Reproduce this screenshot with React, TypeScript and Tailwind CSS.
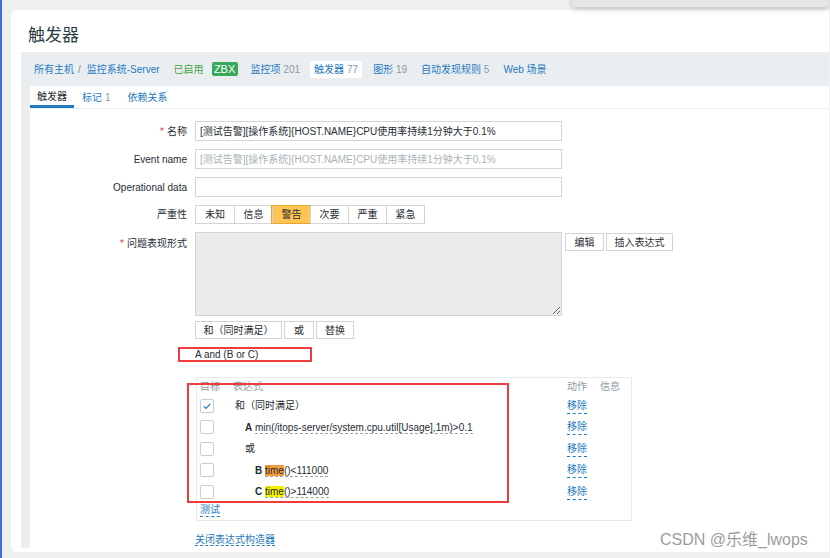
import type { ReactNode } from "react";

const font = "font-['Liberation_Sans','Noto_Sans_CJK_SC',sans-serif]";
const link = "text-[#1f7ac0]";
const dashed = "border-b border-dashed";

function Checkbox({ checked }: { checked?: boolean }) {
  return (
    <span className="flex h-[14px] w-[14px] items-center justify-center rounded-[2px] border border-[#c8ced2] bg-white">
      {checked ? (
        <svg viewBox="0 0 12 12" className="h-[10px] w-[10px]">
          <path d="M2.2 6.4l2.5 2.4L9.9 3.4" fill="none" stroke="#1f7ac0" strokeWidth="1.5" />
        </svg>
      ) : null}
    </span>
  );
}

function FormRow({
  label,
  required,
  top,
  children,
}: {
  label: string;
  required?: boolean;
  top?: boolean;
  children: ReactNode;
}) {
  return (
    <div className={`flex ${top ? "items-start" : "items-center"}`}>
      <div className={`w-[165px] shrink-0 pr-[8px] text-right text-[#1f2c33] ${top ? "pt-[4px]" : ""}`}>
        {required ? <span className="mr-[3px] text-[#d64545]">*</span> : null}
        {label}
      </div>
      {children}
    </div>
  );
}

function Input({ value, muted }: { value?: string; muted?: boolean }) {
  return (
    <div
      className={`flex h-[20px] w-[367px] items-center border border-[#d3d6d8] bg-white px-[4px] ${
        muted ? "text-[#a9b3b8]" : "text-[#1f2c33]"
      }`}
    >
      {value}
    </div>
  );
}

function Btn({ children, w }: { children: ReactNode; w: string }) {
  return (
    <div className={`flex h-[18px] ${w} items-center justify-center border border-[#cfd4d7] bg-white text-[#1f2c33]`}>
      {children}
    </div>
  );
}

const severities = ["未知", "信息", "警告", "次要", "严重", "紧急"];

const exprRows: { checked?: boolean; indent: string; content: ReactNode }[] = [
  { checked: true, indent: "pl-[2px]", content: <span>和（同时满足）</span> },
  {
    indent: "pl-[12px]",
    content: (
      <span>
        <b>A</b> <span className={`${dashed} border-[#9aa5ab]`}>min(/itops-server/system.cpu.util[Usage],1m)&gt;0.1</span>
      </span>
    ),
  },
  { indent: "pl-[12px]", content: <span>或</span> },
  {
    indent: "pl-[22px]",
    content: (
      <span>
        <b>B</b>{" "}
        <span className={`${dashed} border-[#9aa5ab]`}>
          <span className="bg-[#f79a3e]">time</span>()&lt;111000
        </span>
      </span>
    ),
  },
  {
    indent: "pl-[22px]",
    content: (
      <span>
        <b>C</b>{" "}
        <span className={`${dashed} border-[#9aa5ab]`}>
          <span className="bg-[#f4f000]">time</span>()&gt;114000
        </span>
      </span>
    ),
  },
];

export default function App() {
  return (
    <div className={`relative h-[558px] w-[830px] overflow-hidden bg-[#f0f0f0] ${font} text-[10px]`}>
      <div className="absolute left-0 top-0 h-full w-[2px] bg-[#3c6fdc]" />
      <div className="absolute -top-[20px] left-[572px] h-[27px] w-[257px] rounded-b-[4px] bg-[#e6e6e6] shadow-[0_2px_6px_rgba(0,0,0,0.2)]" />

      <div className="pl-[11px] pt-[10px]">
        <div className="flex h-[542px] w-[818px] flex-col rounded-l-[6px] bg-white">
          <h1 className="h-[42px] pl-[17px] pt-[16px] text-[17px] font-normal leading-[20px] text-[#2b3a42]">触发器</h1>

          <div className="ml-[10px] flex h-[496px] flex-col bg-[#ebeef0] pl-[9px]">
            <div className="flex h-[34px] items-center whitespace-nowrap pl-[4px]">
              <span className={link}>所有主机</span>
              <span className="ml-[4px] text-[#768d99]">/</span>
              <span className={`ml-[6px] ${link}`}>监控系统-Server</span>
              <span className="ml-[14px] text-[#3da548]">已启用</span>
              <span className="ml-[8px] flex h-[14px] w-[26px] items-center justify-center rounded-[2px] bg-[#39a85a] text-[11px] text-white">
                ZBX
              </span>
              <span className={`ml-[13px] ${link}`}>
                监控项 <span className="text-[#8a9aa2]">201</span>
              </span>
              <span className={`ml-[10px] flex h-[17px] items-center bg-white px-[4px] ${link}`}>
                触发器 <span className="ml-[3px] text-[#8a9aa2]">77</span>
              </span>
              <span className={`ml-[11px] ${link}`}>
                图形 <span className="text-[#8a9aa2]">19</span>
              </span>
              <span className={`ml-[14px] ${link}`}>
                自动发现规则 <span className="text-[#8a9aa2]">5</span>
              </span>
              <span className={`ml-[14px] ${link}`}>Web 场景</span>
            </div>

            <div className="flex flex-1 flex-col bg-white">
              <div className="flex h-[23px] border-b border-[#ebeef0]">
                <div className="flex h-full items-center border-b-[3px] border-[#1f7ac0] px-[7px] pt-[2px] text-[#1f2c33]">
                  触发器
                </div>
                <div className={`flex h-full items-center px-[8px] ${link}`}>
                  标记 <span className="ml-[3px] text-[#8a9aa2]">1</span>
                </div>
                <div className={`flex h-full items-center px-[9px] ${link}`}>依赖关系</div>
              </div>

              <div className="flex flex-col gap-[8px] pt-[12px]">
                <FormRow label="名称" required>
                  <Input value="[测试告警][操作系统]{HOST.NAME}CPU使用率持续1分钟大于0.1%" />
                </FormRow>
                <FormRow label="Event name">
                  <Input value="[测试告警][操作系统]{HOST.NAME}CPU使用率持续1分钟大于0.1%" muted />
                </FormRow>
                <FormRow label="Operational data">
                  <Input />
                </FormRow>
                <FormRow label="严重性">
                  <div className="flex h-[19px] border border-[#d3d6d8] bg-white">
                    {severities.map((s, i) => (
                      <div
                        key={s}
                        className={`flex w-[38px] items-center justify-center ${i > 0 ? "border-l border-[#d3d6d8]" : ""} ${
                          s === "警告" ? "bg-[#ffc451] text-[#1f2c33] outline outline-[#e6a63a]" : "text-[#1f2c33]"
                        }`}
                      >
                        {s}
                      </div>
                    ))}
                  </div>
                </FormRow>
                <FormRow label="问题表现形式" required top>
                  <div className="flex flex-col">
                    <div className="flex items-start gap-[3px]">
                      <textarea
                        readOnly
                        className="block h-[84px] w-[367px] border border-[#d3d6d8] bg-[#ebebeb] outline-none"
                      />
                      <div className="mt-[1px] flex gap-[2px]">
                        <Btn w="w-[39px]">编辑</Btn>
                        <Btn w="w-[67px]">插入表达式</Btn>
                      </div>
                    </div>
                    <div className="mt-[5px] flex gap-[2px]">
                      <Btn w="w-[87px]">和（同时满足）</Btn>
                      <Btn w="w-[30px]">或</Btn>
                      <Btn w="w-[38px]">替换</Btn>
                    </div>
                    <div className="relative mt-[9px] h-[14px] leading-[14px] text-[#1f2c33]">
                      A and (B or C)
                      <span className="absolute -left-[17px] top-[-1px] h-[15px] w-[134px] border-2 border-[#ef3b3b]" />
                    </div>

                    <div className="relative ml-[1px] mt-[15px] flex h-[144px] w-[436px] flex-col border border-[#e8ebec] px-[3px]">
                      <div className="grid h-[17px] grid-cols-[33px_334px_33px_1fr] items-center text-[#8a9aa2]">
                        <span>目标</span>
                        <span>表达式</span>
                        <span>动作</span>
                        <span>信息</span>
                      </div>
                      {exprRows.map((r, i) => (
                        <div key={i} className="grid h-[21.5px] grid-cols-[33px_334px_33px_1fr] items-center text-[#1f2c33]">
                          <Checkbox checked={r.checked} />
                          <div className={r.indent}>{r.content}</div>
                          <span className={`${link} w-fit ${dashed} border-[#1f7ac0]`}>移除</span>
                          <span />
                        </div>
                      ))}
                      <div className="flex h-[16px] items-center">
                        <span className={`${link} ${dashed} border-[#1f7ac0] leading-[12px]`}>测试</span>
                      </div>
                      <span className="absolute -left-[10px] top-[5px] h-[120px] w-[322px] border-2 border-[#ef3b3b]" />
                    </div>

                    <div className="mt-[11px] h-[14px]">
                      <span className={`${link} ${dashed} border-[#1f7ac0] leading-[12px]`}>关闭表达式构造器</span>
                    </div>
                  </div>
                </FormRow>
              </div>
            </div>
          </div>
        </div>
      </div>

      <div className="absolute left-[660px] top-[530px] text-[16px] leading-[20px] text-[#9c9c9c]">CSDN @乐维_lwops</div>
    </div>
  );
}
